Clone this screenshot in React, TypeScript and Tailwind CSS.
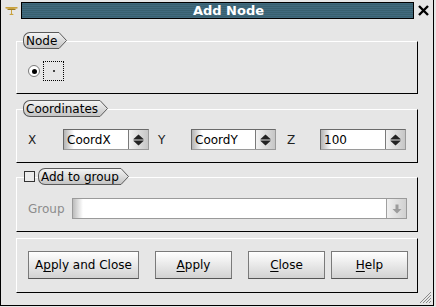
import React from 'react';

const font = "font-['DejaVu_Sans','Liberation_Sans',sans-serif]";

const Tab: React.FC<{ label: string }> = ({ label }) => (
  <div className="flex h-[17px] items-stretch">
    <div className="flex items-center rounded-l-[7px] border border-r-0 border-[#5a5a5a] bg-[linear-gradient(to_bottom,#f4f4f4,#c4c4c4)] pl-[2px] pr-[1px] text-[12px] leading-none text-black">
      {label}
    </div>
    <svg width="9" height="17" viewBox="0 0 9 17" className="block">
      <defs>
        <linearGradient id="tabg" x1="0" y1="0" x2="0" y2="1">
          <stop offset="0" stopColor="#f4f4f4" />
          <stop offset="1" stopColor="#c4c4c4" />
        </linearGradient>
      </defs>
      <polygon points="0,0.5 1,0.5 8.5,8.5 1,16.5 0,16.5" fill="url(#tabg)" />
      <polyline points="0,0.5 1,0.5 8.5,8.5 1,16.5 0,16.5" fill="none" stroke="#5a5a5a" strokeWidth="1" />
    </svg>
  </div>
);

const GroupBox: React.FC<{ className?: string; tab?: React.ReactNode; children: React.ReactNode }> = ({
  className,
  tab,
  children,
}) => (
  <div className={`relative border-t border-l border-t-white border-l-white border-r border-b border-r-black border-b-black ${className ?? ''}`}>
    {tab && <div className="absolute left-[6px] top-[-10px]">{tab}</div>}
    {children}
  </div>
);

const SpinArrows = () => (
  <div className="flex w-[20px] items-center justify-center border-l border-[#7a7a7a] bg-[linear-gradient(to_right,#f2f2f2,#c6c6c6)]">
    <svg width="11" height="12" viewBox="0 0 11 12">
      <polygon points="5.5,0.5 10.5,5 0.5,5" fill="#222" />
      <line x1="0.5" y1="6" x2="10.5" y2="6" stroke="#222" strokeWidth="1" />
      <polygon points="0.5,7 10.5,7 5.5,11.5" fill="#222" />
    </svg>
  </div>
);

const SpinBox: React.FC<{ value: string; w: string }> = ({ value, w }) => (
  <div className={`flex h-[21px] ${w} border border-t-[#6a6a6a] border-l-[#6a6a6a] border-r-[#9a9a9a] border-b-[#9a9a9a]`}>
    <div className="flex flex-1 items-center bg-[linear-gradient(to_right,#b4b4b4,#ffffff_10px)] pl-[3px] text-[12px] text-black">
      {value}
    </div>
    <SpinArrows />
  </div>
);

const Btn: React.FC<{ pre: string; u: string; post: string; w: string }> = ({ pre, u, post, w }) => (
  <button
    className={`flex h-[28px] ${w} items-center justify-center border border-[#7a7a7a] border-b-[#555] bg-[linear-gradient(to_bottom,#ffffff,#d2d2d2)] text-[12px] text-black`}
  >
    {pre}
    <span className="underline underline-offset-2">{u}</span>
    {post}
  </button>
);

export default function App() {
  return (
    <div className={`${font} h-[307px] w-[436px] overflow-hidden bg-[#e6e6e6]`}>
      <div className="relative mr-[2px] h-[306px] border-b border-l border-r border-black">
        {/* title */}
        <div className="flex h-[20px] items-center pt-[1px]">
          <div className="flex w-[20px] justify-center">
            <svg width="13" height="10" viewBox="0 0 13 10">
              <path d="M0.5 1 L12.5 1 L12.5 2.5 L8 3 L7 4 L7 7.5 L9 9 L4 9 L6 7.5 L6 4 L5 3 L0.5 2.5 Z" fill="#c9a23e" />
              <path d="M2.5 3.5 L10.5 3.5" stroke="#9a7a28" strokeWidth="1" />
            </svg>
          </div>
          <div className="flex h-[17px] flex-1 items-center border border-black bg-[repeating-linear-gradient(to_bottom,#416a7e_0px,#416a7e_1px,#38606f_1px,#38606f_2px)] pl-[22px]">
            <div className="flex-1 text-center text-[13px] font-bold leading-none text-white">Add Node</div>
          </div>
          <div className="flex w-[19px] justify-center">
            <svg width="11" height="11" viewBox="0 0 11 11">
              <path d="M1 1 L10 10 M10 1 L1 10" stroke="#000" strokeWidth="2.4" />
            </svg>
          </div>
        </div>

        <div className="px-[15px] pt-[21px]">
          {/* Node */}
          <GroupBox className="h-[53px]" tab={<Tab label="Node" />}>
            <div className="flex items-center pl-[11px] pt-[19px]">
              <div className="flex h-[12px] w-[12px] items-center justify-center rounded-full border border-[#7a7a7a] bg-white">
                <div className="h-[5px] w-[5px] rounded-full bg-black" />
              </div>
              <div className="ml-[3px] flex h-[20px] w-[21px] items-center justify-center border border-dotted border-black">
                <div className="h-[2px] w-[2px] bg-[#444]" />
              </div>
            </div>
          </GroupBox>

          {/* Coordinates */}
          <GroupBox className="mt-[15px] h-[54px]" tab={<Tab label="Coordinates" />}>
            <div className="flex items-center pl-[11px] pt-[19px] text-[12px] text-[#222]">
              <div className="w-[35px]">X</div>
              <SpinBox value="CoordX" w="w-[86px]" />
              <div className="ml-[9px] w-[33px]">Y</div>
              <SpinBox value="CoordY" w="w-[85px]" />
              <div className="ml-[11px] w-[33px]">Z</div>
              <SpinBox value="100" w="w-[86px]" />
            </div>
          </GroupBox>

          {/* Add to group */}
          <GroupBox
            className="mt-[14px] h-[55px]"
            tab={
              <div className="flex items-center">
                <div className="ml-[1px] mr-[3px] h-[11px] w-[11px] border border-[#333] bg-[#ececec]" />
                <Tab label="Add to group" />
              </div>
            }
          >
            <div className="flex items-center pl-[11px] pt-[20px] text-[12px]">
              <div className="w-[44px] text-[#8c8c8c]">Group</div>
              <div className="flex h-[21px] w-[335px] border border-[#9a9a9a]">
                <div className="flex-1 bg-[linear-gradient(to_right,#bcbcbc,#ffffff_10px)]" />
                <div className="flex w-[20px] items-center justify-center border-l border-[#a0a0a0] bg-[linear-gradient(to_right,#f0f0f0,#d0d0d0)]">
                  <svg width="10" height="10" viewBox="0 0 10 10">
                    <rect x="3.5" y="0.5" width="3" height="5" fill="#9c9c9c" />
                    <polygon points="0.5,5 9.5,5 5,9.5" fill="#9c9c9c" />
                  </svg>
                </div>
              </div>
            </div>
          </GroupBox>

          {/* buttons */}
          <GroupBox className="mt-[6px] h-[55px]">
            <div className="flex items-center pl-[11px] pt-[12px]">
              <Btn pre="A" u="p" post="ply and Close" w="w-[111px]" />
              <div className="ml-[16px]">
                <Btn pre="" u="A" post="pply" w="w-[77px]" />
              </div>
              <div className="ml-[16px]">
                <Btn pre="" u="C" post="lose" w="w-[77px]" />
              </div>
              <div className="ml-[6px]">
                <Btn pre="" u="H" post="elp" w="w-[77px]" />
              </div>
            </div>
          </GroupBox>
        </div>

        {/* resize grip */}
        <svg width="12" height="12" viewBox="0 0 12 12" className="absolute bottom-[1px] right-[1px]">
          <path d="M11 3 L3 11 M11 6 L6 11 M11 9 L9 11 M11 0 L0 11" stroke="#8a8a8a" strokeWidth="1" />
        </svg>
      </div>
    </div>
  );
}
